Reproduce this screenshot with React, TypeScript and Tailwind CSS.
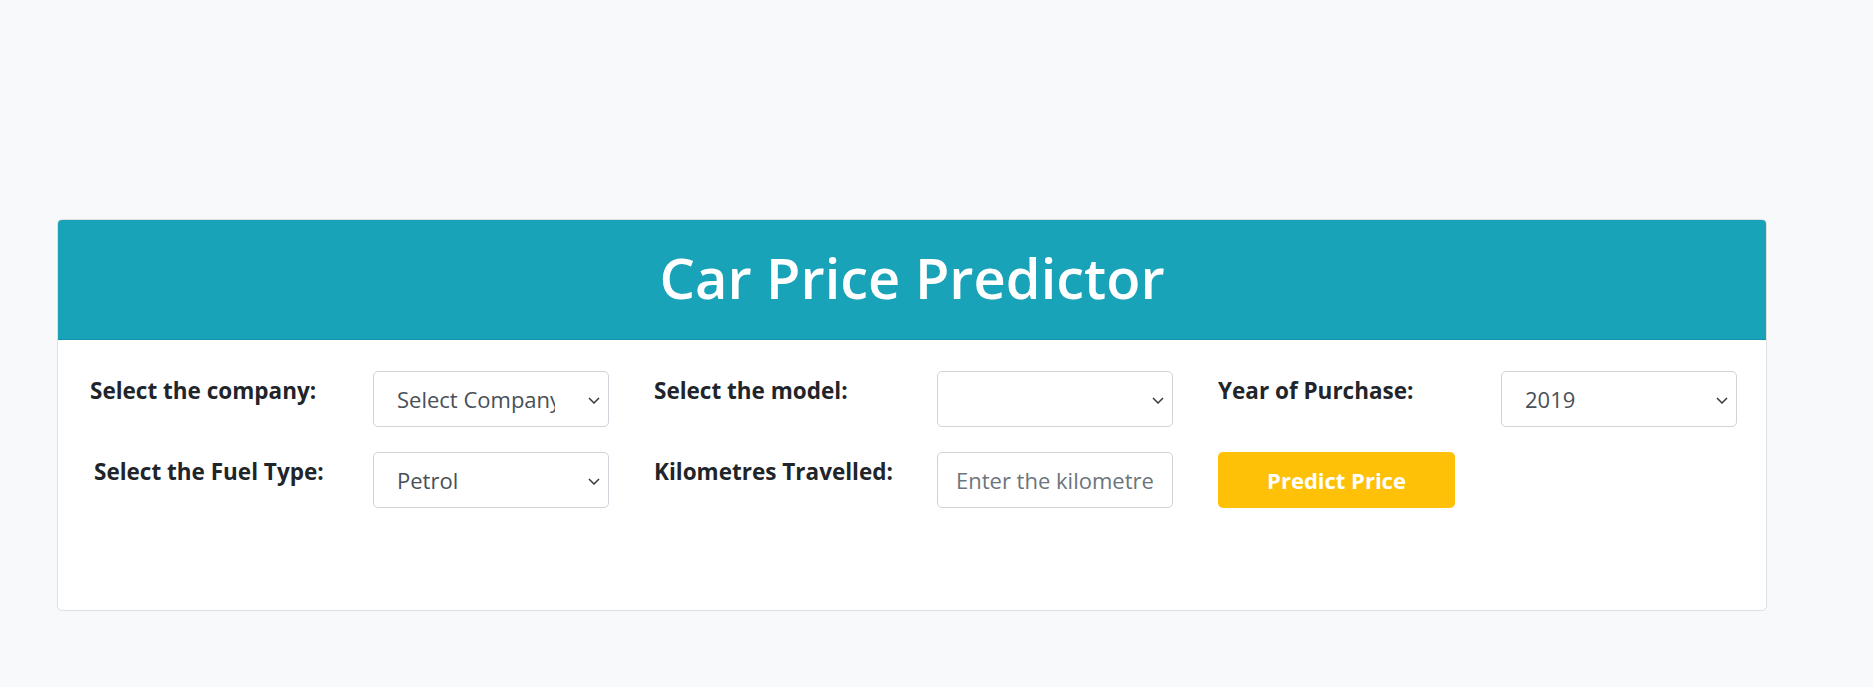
import React from 'react'

const sans = "font-['Open_Sans','Noto_Sans',sans-serif]"

function Chevron() {
  return (
    <svg width="12" height="7" viewBox="0 0 12 7" className="mt-[2px] shrink-0">
      <path d="M1 1l5 5 5-5" fill="none" stroke="#3a3a3a" strokeWidth="1.5" />
    </svg>
  )
}

function FakeSelect({ value, clip }: { value: string; clip?: boolean }) {
  return (
    <div className="flex h-[56px] w-[236px] items-center justify-between rounded-[5px] border border-[#ced4da] bg-white pl-[23px] pr-[8px]">
      <span
        className={`overflow-hidden whitespace-nowrap text-[22px] text-[#495057] ${clip ? 'w-[158px]' : ''}`}
      >
        {value}
      </span>
      <Chevron />
    </div>
  )
}

function Field({ label, children, offset }: { label: string; children: React.ReactNode; offset?: boolean }) {
  return (
    <div className="flex w-[519px]">
      <div className={`w-[283px] pt-[6px] text-[22.5px] font-bold leading-[27px] text-[#212529] ${offset ? 'pl-[4px]' : ''}`}>
        {label}
      </div>
      {children}
    </div>
  )
}

export default function App() {
  return (
    <div className={`min-h-[687px] bg-[#f8f9fa] pt-[219px] ${sans}`}>
      <div className="ml-[57px] h-[392px] w-[1710px] overflow-hidden rounded-[5px] border border-[#dfe0e1] bg-white">
        {/* header */}
        <div className="flex h-[120px] items-center justify-center border-b border-black/10 bg-[#18a3b9] pb-[6px]">
          <h1 className="text-[56px] font-semibold leading-none text-white">Car Price Predictor</h1>
        </div>
        {/* form */}
        <div className="flex flex-col gap-[25px] pl-[32px] pt-[31px]">
          <div className="flex gap-[45px]">
            <Field label="Select the company:">
              <FakeSelect value="Select Company" clip />
            </Field>
            <Field label="Select the model:">
              <FakeSelect value="" />
            </Field>
            <Field label="Year of Purchase:">
              <FakeSelect value="2019" />
            </Field>
          </div>
          <div className="flex gap-[45px]">
            <Field label="Select the Fuel Type:" offset>
              <FakeSelect value="Petrol" />
            </Field>
            <Field label="Kilometres Travelled:">
              <input
                className="h-[56px] w-[236px] rounded-[5px] border border-[#ced4da] bg-white px-[18px] text-[22px] text-[#495057] outline-none placeholder:text-[#6c757d]"
                placeholder="Enter the kilometres travelled"
              />
            </Field>
            <div className="flex w-[519px]">
              <button className="h-[56px] w-[237px] rounded-[5px] bg-[#ffc107] text-[22px] font-bold text-white">
                Predict Price
              </button>
            </div>
          </div>
        </div>
      </div>
    </div>
  )
}
